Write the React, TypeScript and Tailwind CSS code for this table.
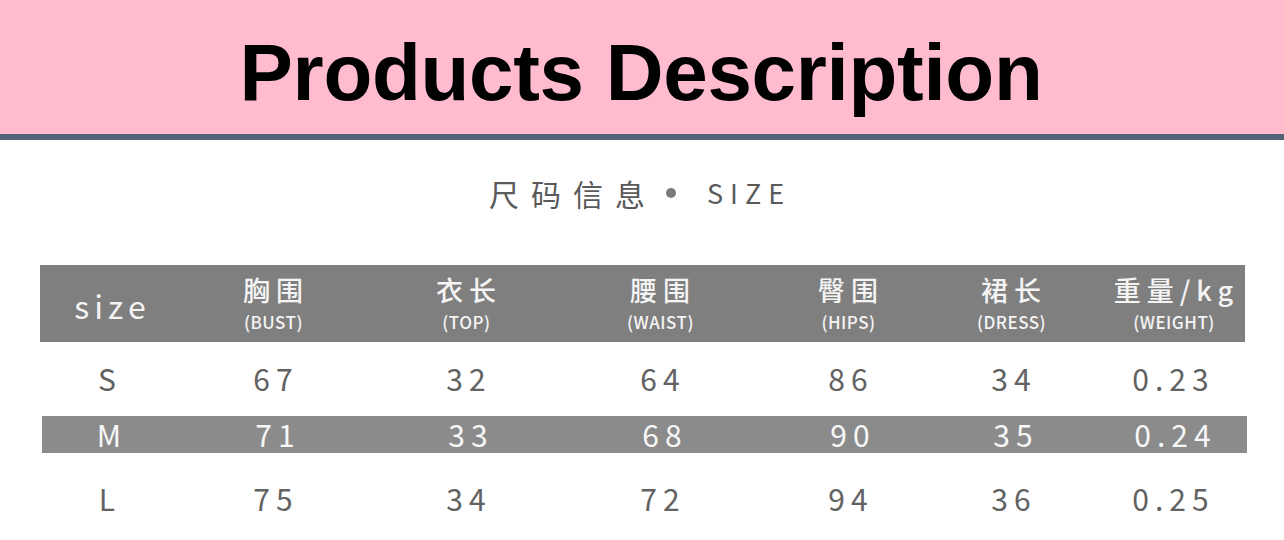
import React from "react";

const cols = "grid grid-cols-[140px_186px_200px_188px_188px_138px_165px]";

const headers: { zh: string; en: string; extra?: string }[] = [
  { zh: "胸围", en: "(BUST)" },
  { zh: "衣长", en: "(TOP)" },
  { zh: "腰围", en: "(WAIST)" },
  { zh: "臀围", en: "(HIPS)" },
  { zh: "裙长", en: "(DRESS)" },
  { zh: "重量/kg", en: "(WEIGHT)", extra: "pl-[22px]" },
];

const rows: { size: string; vals: string[]; hl?: boolean; h: string }[] = [
  { size: "S", vals: ["67", "32", "64", "86", "34", "0.23"], h: "h-[74px]" },
  { size: "M", vals: ["71", "33", "68", "90", "35", "0.24"], hl: true, h: "h-[37px]" },
  { size: "L", vals: ["75", "34", "72", "94", "36", "0.25"], h: "h-[92px]" },
];

const cjk = "font-['Noto_Sans_CJK_SC',sans-serif]";

export default function App() {
  return (
    <div className="w-[1284px] h-[540px] bg-white overflow-hidden">
      <div className="h-[134px] bg-[#ffbccf] pt-[33px] text-center">
        <div className="font-['Liberation_Sans',Arial,sans-serif] font-bold text-[80px] leading-[80px] text-black tracking-[-0.3px] pr-[2px]">
          Products Description
        </div>
      </div>
      <div className="h-[6px] bg-[#54627a]" />

      <div className={`mt-[33px] h-[40px] flex items-center justify-center pr-[14px] text-[#5a5a5a] ${cjk}`}>
        <span className="text-[30px] leading-[40px] tracking-[12px] pl-[10px]">尺码信息</span>
        <span className="ml-[9px] w-[10px] h-[10px] rounded-full bg-[#7a7a7a]" />
        <span className="ml-[31px] text-[27px] leading-[40px] tracking-[7px]">SIZE</span>
      </div>

      <div className={`mt-[52px] ml-[40px] w-[1205px] ${cjk}`}>
        <div className={`${cols} h-[77px] bg-[#7f7f7f] text-[#f4f4f4]`}>
          <div className="flex items-center justify-center pt-[2px] text-[32px] leading-[40px] tracking-[5px] pl-[5px]">
            size
          </div>
          {headers.map((h) => (
            <div key={h.zh} className={`flex flex-col items-center pt-[9px] ${h.extra ?? ""}`}>
              <div className="text-[27px] leading-[32px] font-medium tracking-[6px] pl-[6px] whitespace-nowrap">{h.zh}</div>
              <div className="mt-[6px] text-[17px] leading-[20px] font-medium tracking-[0.5px] pl-[1px] whitespace-nowrap">{h.en}</div>
            </div>
          ))}
        </div>
        {rows.map((r) => (
          <div
            key={r.size}
            className={`${cols} ${r.h} items-center pb-[3px] text-[30px] leading-[36px] ${
              r.hl ? "bg-[#8b8b8b] text-[#f7f7f7] ml-[2px] -mr-[2px]" : "text-[#626262]"
            }`}
          >
            <div className="text-center pr-[6px]">{r.size}</div>
            {r.vals.map((v, i) => (
              <div key={i} className={`text-center tracking-[6px] pl-[6px] ${i === 5 ? "pl-[22px]" : ""}`}>
                {v}
              </div>
            ))}
          </div>
        ))}
      </div>
    </div>
  );
}
